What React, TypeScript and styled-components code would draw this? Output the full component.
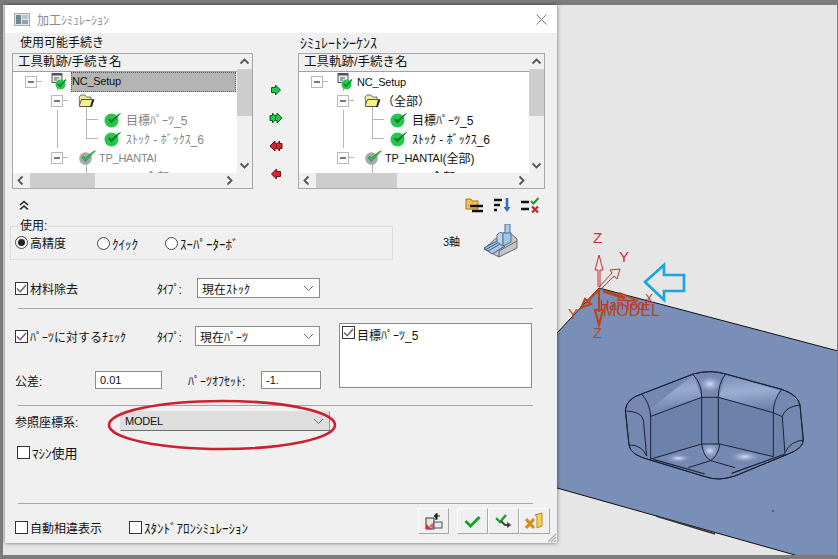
import { FC, ReactNode } from "react";
import styled, { createGlobalStyle } from "styled-components";

const GlobalStyle = createGlobalStyle`
    html, body {
        margin: 0;
        padding: 0;
        background: #7c7c7c;
    }
    * {
        box-sizing: border-box;
    }
`;

const Page = styled.div`
    width: 838px;
    height: 559px;
    overflow: hidden;
    display: flex;
    flex-direction: column;
    padding: 5px 1px 4px 3px;
    background: #7c7c7c;
    font-family: "Liberation Sans", "Noto Sans CJK JP", sans-serif;
    font-size: 12px;
    color: #111;
`;

const Desktop = styled.div`
    flex: 1;
    display: flex;
    align-items: flex-start;
    background: #e6e6e6;
    padding-left: 2px;
    min-height: 0;
`;

const Dialog = styled.div`
    width: 552px;
    height: 538px;
    flex: none;
    display: flex;
    flex-direction: column;
    background: #f0f0f0;
    position: relative;
    box-shadow: 0 0 4px rgba(0, 0, 0, 0.55);
`;

const TitleBar = styled.div`
    height: 28px;
    flex: none;
    display: flex;
    align-items: center;
    gap: 7px;
    padding: 0 10px 0 9px;
    background: #fff;
    color: #8a8a8a;
`;

const TitleText = styled.span`
    flex: 1;
`;

const Lists = styled.div`
    display: flex;
    padding: 3px 12px 0 7px;
    height: 156px;
    flex: none;
`;

const ListColumn = styled.div<{ $width: number }>`
    width: ${p => p.$width}px;
    flex: none;
    display: flex;
    flex-direction: column;
`;

const ListCaption = styled.div<{ $kana?: boolean }>`
    height: 17px;
    line-height: 14px;
    padding-left: ${p => (p.$kana ? 2 : 8)}px;
    font-size: ${p => (p.$kana ? 14 : 12)}px;
`;

const TreeBox = styled.div`
    height: 136px;
    display: grid;
    grid-template-columns: 1fr 15px;
    grid-template-rows: 1fr 15px;
    border: 1px solid #a8a8a8;
    background: #fff;
`;

const TreePane = styled.div`
    overflow: hidden;
    min-width: 0;
`;

const TreeHeader = styled.div`
    height: 18px;
    line-height: 17px;
    padding-left: 5px;
    background: #f0f0f0;
    border-bottom: 1px solid #a0a0a0;
    font-size: 12.5px;
`;

// connector lines are backgrounds: x, y, w, h
const line = (x: number, y: number, w: number | string, h: number | string) =>
    `linear-gradient(#b5b5b5, #b5b5b5) ${x}px ${y}px / ${typeof w === "number" ? `${w}px` : w} ${
        typeof h === "number" ? `${h}px` : h
    } no-repeat`;

const lineSets: Record<string, string> = {
    root: `${line(44, 10, 1, 9)}, ${line(24, 9, 5, 1)}`,
    branchMid: `${line(44, 0, 1, 19)}, ${line(73, 0, 1, 19)}, ${line(73, 9, 12, 1)}`,
    branchEnd: `${line(44, 0, 1, 19)}, ${line(73, 0, 1, 10)}, ${line(73, 9, 12, 1)}`,
    parent: `${line(73, 15, 1, 4)}, ${line(50, 9, 5, 1)}`,
    tail: line(73, 0, 1, 19),
};

const TreeRow = styled.div<{ $lines?: string; $dim?: boolean }>`
    height: 19px;
    display: flex;
    align-items: center;
    position: relative;
    white-space: nowrap;
    color: ${p => (p.$dim ? "#858585" : "#111")};
    ${p => p.$lines && `background: ${lineSets[p.$lines]};`}
`;

const Slot = styled.span<{ $left: number }>`
    position: absolute;
    left: ${p => p.$left}px;
    display: inline-flex;
    align-items: center;
`;

const Latin = styled.span`
    font-size: 11px;
    letter-spacing: -0.25px;
`;

const Expander = styled.span`
    width: 12px;
    height: 12px;
    border: 1px solid #b8b8b8;
    background: #fff;
    position: relative;
    display: block;

    &::after {
        content: "";
        position: absolute;
        left: 2px;
        right: 2px;
        top: 4px;
        height: 2px;
        background: #222;
        transform: scaleY(0.6);
    }
`;

const SelectedLabel = styled.span`
    width: 165px;
    height: 20px;
    line-height: 18px;
    padding-left: 1px;
    background: #b4b4b4;
    outline: 1px dotted #555;
    outline-offset: -1px;
`;

const VScroll = styled.div`
    display: flex;
    flex-direction: column;
    background: #f0f0f0;
    align-items: center;
`;

const HScroll = styled.div`
    display: flex;
    align-items: center;
    background: #f0f0f0;
`;

const ScrollThumb = styled.div<{ $width?: number; $offset?: number }>`
    background: #cdcdcd;
    ${p =>
        p.$width
            ? `width: ${p.$width}px; height: 15px; margin-left: ${p.$offset}px;`
            : "width: 15px; height: 47px;"}
`;

const ScrollSpacer = styled.div`
    flex: 1;
`;

const ScrollCorner = styled.div`
    background: #f0f0f0;
`;

const ArrowColumn = styled.div`
    width: 45px;
    flex: none;
    display: flex;
    flex-direction: column;
    align-items: center;
    gap: 14px;
    padding-top: 47px;
`;

const ToolRow = styled.div`
    height: 30px;
    flex: none;
    display: flex;
    align-items: center;
    padding: 2px 17px 0 13px;
`;

const ToolIcons = styled.div`
    margin-left: auto;
    display: flex;
    gap: 9px;
`;

const UseRow = styled.div`
    height: 51px;
    flex: none;
    display: flex;
    align-items: flex-start;
    padding-left: 5px;
`;

const UseGroup = styled.fieldset`
    width: 383px;
    height: 41px;
    margin: 0;
    padding: 0 0 0 4px;
    border: 1px solid #dcdcdc;
    display: flex;
    align-items: flex-start;

    legend {
        padding: 0 1px;
        margin-left: 4px;
        line-height: 14px;
    }
`;

const Radio = styled.label<{ $width: number; $kana?: boolean }>`
    width: ${p => p.$width}px;
    display: flex;
    align-items: center;
    gap: 2px;
    margin-top: 1px;
    font-size: ${p => (p.$kana ? 13 : 12)}px;
`;

const RadioDot = styled.span<{ $on?: boolean }>`
    width: 13px;
    height: 13px;
    border-radius: 50%;
    border: 1px solid #444;
    background: #fff;
    flex: none;
    display: flex;
    align-items: center;
    justify-content: center;

    &::after {
        content: "";
        width: 7px;
        height: 7px;
        border-radius: 50%;
        background: ${p => (p.$on ? "#222" : "transparent")};
    }
`;

const AxisInfo = styled.div`
    display: flex;
    align-items: center;
    gap: 23px;
    margin-left: 50px;
    height: 36px;
    margin-top: 4px;
`;

const AxisLabel = styled.span`
    font-size: 11px;
`;

const Divider = styled.div<{ $top?: number }>`
    height: 1px;
    flex: none;
    margin: ${p => p.$top ?? 0}px 24px 0 13px;
    background: #a6a6a6;
`;

const FormRow = styled.div<{ $top?: number; $height: number; $left?: number }>`
    height: ${p => p.$height}px;
    margin-top: ${p => p.$top ?? 0}px;
    flex: none;
    display: flex;
    align-items: center;
    padding-left: ${p => p.$left ?? 10}px;
`;

const CheckLabel = styled.label<{ $width?: number; $kana?: boolean }>`
    ${p => p.$width && `width: ${p.$width}px; flex: none;`}
    display: flex;
    align-items: center;
    gap: 2px;
    white-space: nowrap;
    font-size: ${p => (p.$kana ? 13 : 12)}px;
`;

const CheckBox = styled.span`
    width: 13px;
    height: 13px;
    flex: none;
    border: 1px solid #333;
    background: #fff;
    display: flex;
    align-items: center;
    justify-content: center;
`;

const FieldLabel = styled.span<{ $width: number }>`
    width: ${p => p.$width}px;
    flex: none;
    white-space: nowrap;
`;

const TypeLabel = styled(FieldLabel)`
    letter-spacing: -0.8px;
`;

const SelectBox = styled.div<{ $width: number; $gray?: boolean }>`
    width: ${p => p.$width}px;
    height: 20px;
    flex: none;
    display: flex;
    align-items: center;
    justify-content: space-between;
    padding: 0 5px 0 4px;
    border: 1px solid #8a8a8a;
    background: ${p => (p.$gray ? "#dedede" : "#fff")};
    ${p => p.$gray && "border-color: #dedede #9a9a9a #6f6f6f #dedede;"}
`;

const TextBox = styled.div<{ $width: number }>`
    width: ${p => p.$width}px;
    height: 18px;
    flex: none;
    line-height: 16px;
    padding-left: 4px;
    border: 1px solid #8a8a8a;
    background: #fff;
    font-size: 11px;
`;

const PartsBlock = styled.div`
    display: flex;
    flex: none;
    margin-top: 14px;
    padding-left: 10px;
    height: 66px;
`;

const PartsFields = styled.div`
    width: 324px;
    flex: none;
    display: flex;
    flex-direction: column;
    padding-top: 3px;
    gap: 25px;
`;

const PartsLine = styled.div`
    display: flex;
    align-items: center;
`;

const TargetList = styled.div`
    width: 193px;
    height: 65px;
    flex: none;
    padding: 2px;
    display: flex;
    align-items: flex-start;
    gap: 2px;
    border: 1px solid #8a8a8a;
    background: #fff;
`;

const EllipseMark = styled.svg`
    position: absolute;
    left: 102px;
    top: 394px;
    pointer-events: none;
`;

const Filler = styled.div`
    flex: 1;
`;

const BottomRow = styled.div`
    height: 39px;
    flex: none;
    display: flex;
    align-items: flex-start;
    padding: 4px 7px 0 10px;
`;

const BottomChecks = styled.div`
    display: flex;
    gap: 27px;
    padding-top: 10px;
    flex: 1;
`;

const ButtonGroup = styled.div<{ $gap?: number }>`
    display: flex;
    margin-left: ${p => p.$gap ?? 0}px;
`;

const IconButton = styled.button`
    width: 31px;
    height: 26px;
    padding: 0;
    display: flex;
    align-items: center;
    justify-content: center;
    background: #f0f0f0;
    border: 1px solid;
    border-color: #fff #a8a8a8 #a8a8a8 #fff;
`;

const Grip = styled.svg`
    position: absolute;
    right: 0;
    bottom: 0;
`;

const Viewport = styled.svg`
    flex: 1;
    height: 550px;
    display: block;
`;

const Sm: FC<{ children: ReactNode }> = ({ children }) => <>{children}</>;

const Chevron: FC<{ dir: "up" | "down" | "left" | "right" }> = ({ dir }) => {
    const pts = {
        up: "2,8 6,4 10,8",
        down: "2,4 6,8 10,4",
        left: "8,2 4,6 8,10",
        right: "4,2 8,6 4,10",
    }[dir];
    return (
        <svg width='15' height='15' viewBox='-1.5 -1.5 15 15'>
            <polyline points={pts} fill='none' stroke='#555' strokeWidth='1.8' />
        </svg>
    );
};

const Drop = () => (
    <svg width='11' height='7' viewBox='0 0 11 7'>
        <polyline points='1,1 5.5,5.5 10,1' fill='none' stroke='#666' strokeWidth='1' />
    </svg>
);

const Tick = () => (
    <svg width='11' height='11' viewBox='0 0 11 11'>
        <polyline points='1,5.5 4.2,8.8 10,2' fill='none' stroke='#666' strokeWidth='1.4' />
    </svg>
);

const BallCheck: FC<{ gray?: boolean }> = ({ gray }) => (
    <svg width='19' height='17' viewBox='0 0 19 17'>
        <circle cx='7.5' cy='9.5' r={gray ? 6.3 : 7} fill={gray ? "#a9a9a9" : "#22c84a"} />
        <path
            d='M4 8.8 L7.4 12.4 L17.5 1.8 L14.6 3 L7.5 9 L5.8 7.4 Z'
            fill={gray ? "#22c84a" : "#0f7a2c"}
            stroke={gray ? "#0f7a2c" : "none"}
            strokeWidth='0.6'
        />
    </svg>
);

const SetupIcon = () => (
    <svg width='17' height='17' viewBox='0 0 17 17'>
        <rect x='1' y='0.5' width='10' height='9' fill='#eee' stroke='#555' />
        <rect x='1' y='0.5' width='10' height='2' fill='#555' />
        <path d='M3 5h5M3 7h3' stroke='#555' />
        <circle cx='9.5' cy='11.5' r='5' fill='#22c84a' />
        <path d='M6.6 10.6 L9 13.2 L15 6.5' stroke='#0f7a2c' strokeWidth='1.4' fill='none' />
    </svg>
);

const FolderIcon = () => (
    <svg width='17' height='14' viewBox='0 0 17 14'>
        <path d='M1 3 L3 1 H7 L8.5 3 H13 V12 H2 Z' fill='#efe7a8' stroke='#777' />
        <path d='M1 12 L3.5 5.5 H16 L13.5 12.5 H1.5 Z' fill='#f6ef8e' stroke='#555' />
        <path d='M14 6 L16 6 L13.6 13 H12 Z' fill='#222' />
    </svg>
);

const Arrow: FC<{ color: string; edge: string; dir: 1 | -1; double?: boolean }> = ({
    color,
    edge,
    dir,
    double,
}) => (
    <svg width='14' height='14' viewBox='0 0 14 14'>
        <g transform={dir === -1 ? "translate(14,0) scale(-1,1)" : undefined}>
            {double ? (
                <>
                    <path d='M1 4.5 H3.5 V2 L8 7 L3.5 12 V9.5 H1 Z' fill={color} stroke={edge} />
                    <path d='M6.5 4.5 H8 V2 L13 7 L8 12 V9.5 H6.5 Z' fill={color} stroke={edge} />
                </>
            ) : (
                <path d='M2.5 4.5 H6.5 V2 L11.5 7 L6.5 12 V9.5 H2.5 Z' fill={color} stroke={edge} />
            )}
        </g>
    </svg>
);

const Tree: FC<{ dim?: boolean; folderLabel?: string; hantaiSuffix?: string; selected?: boolean }> = ({
    dim,
    folderLabel,
    hantaiSuffix,
    selected,
}) => (
    <TreeBox>
        <TreePane>
            <TreeHeader>工具軌跡/手続き名</TreeHeader>
            <TreeRow $lines='root'>
                <Slot $left={12}>
                    <Expander />
                </Slot>
                <Slot $left={38}>
                    <SetupIcon />
                </Slot>
                <Slot $left={58}>
                    {selected ? (
                        <SelectedLabel>
                            <Latin>NC_Setup</Latin>
                        </SelectedLabel>
                    ) : (
                        <Latin>NC_Setup</Latin>
                    )}
                </Slot>
            </TreeRow>
            <TreeRow $lines='parent'>
                <Slot $left={38}>
                    <Expander />
                </Slot>
                <Slot $left={65}>
                    <FolderIcon />
                </Slot>
                {folderLabel && <Slot $left={83}>{folderLabel}</Slot>}
            </TreeRow>
            <TreeRow $lines='branchMid' $dim={dim}>
                <Slot $left={91}>
                    <BallCheck />
                </Slot>
                <Slot $left={113}>目標ﾊﾟｰﾂ_5</Slot>
            </TreeRow>
            <TreeRow $lines='branchEnd' $dim={dim}>
                <Slot $left={91}>
                    <BallCheck />
                </Slot>
                <Slot $left={113}>ｽﾄｯｸ - ﾎﾞｯｸｽ_6</Slot>
            </TreeRow>
            <TreeRow $lines='parent' $dim={dim}>
                <Slot $left={38}>
                    <Expander />
                </Slot>
                <Slot $left={65}>
                    <BallCheck gray />
                </Slot>
                <Slot $left={86}>
                    <Latin>TP_HANTAI</Latin>
                    {hantaiSuffix}
                </Slot>
            </TreeRow>
            <TreeRow $lines='tail' $dim={dim}>
                <Slot $left={128}>(全部)</Slot>
            </TreeRow>
        </TreePane>
        <VScroll>
            <Chevron dir='up' />
            <ScrollThumb />
            <ScrollSpacer />
            <Chevron dir='down' />
        </VScroll>
        <HScroll>
            <Chevron dir='left' />
            <ScrollThumb $width={selected ? 65 : 81} $offset={2} />
            <ScrollSpacer />
            <Chevron dir='right' />
        </HScroll>
        <ScrollCorner />
    </TreeBox>
);

const App = () => {
    return (
        <Page>
            <GlobalStyle />
            <Desktop>
                <Dialog>
                    <TitleBar>
                        <svg width='16' height='13' viewBox='0 0 16 13'>
                            <rect x='0.5' y='0.5' width='15' height='12' fill='#dfe6ea' stroke='#a4acb2' />
                            <rect x='2' y='2' width='5' height='9' fill='#6d8894' />
                            <rect x='8' y='2' width='6' height='4' fill='#b5c6ce' />
                            <rect x='8' y='7' width='6' height='4' fill='#8aa3ae' />
                        </svg>
                        <TitleText>加工ｼﾐｭﾚｰｼｮﾝ</TitleText>
                        <svg width='11' height='11' viewBox='0 0 11 11'>
                            <path d='M0.5 0.5 L10.5 10.5 M10.5 0.5 L0.5 10.5' stroke='#777' strokeWidth='1' />
                        </svg>
                    </TitleBar>

                    <Lists>
                        <ListColumn $width={241}>
                            <ListCaption>使用可能手続き</ListCaption>
                            <Tree dim selected />
                        </ListColumn>
                        <ArrowColumn>
                            <Arrow color='#22c84a' edge='#0c5a20' dir={1} />
                            <Arrow color='#22c84a' edge='#0c5a20' dir={1} double />
                            <Arrow color='#d8242c' edge='#6a0c10' dir={-1} double />
                            <Arrow color='#d8242c' edge='#6a0c10' dir={-1} />
                        </ArrowColumn>
                        <ListColumn $width={247}>
                            <ListCaption $kana>ｼﾐｭﾚｰﾄｼｰｹﾝｽ</ListCaption>
                            <Tree folderLabel='（全部）' hantaiSuffix='(全部)' />
                        </ListColumn>
                    </Lists>

                    <ToolRow>
                        <svg width='12' height='11' viewBox='0 0 12 11'>
                            <path d='M2 5 L6 1.5 L10 5 M2 9.5 L6 6 L10 9.5' fill='none' stroke='#222' strokeWidth='1.6' />
                        </svg>
                        <ToolIcons>
                            <svg width='19' height='17' viewBox='0 0 19 17'>
                                <path d='M1 2 H6 L7 4 H13 V12 H1 Z' fill='#f6c04e' stroke='#a8761c' />
                                <path d='M5 9 H18 M7 14 H18' stroke='#111' strokeWidth='2.4' />
                            </svg>
                            <svg width='19' height='17' viewBox='0 0 19 17'>
                                <path d='M1 3 H9 M1 8 H7 M1 13 H4' stroke='#111' strokeWidth='2.4' />
                                <path d='M14 1 V11' stroke='#2a6fc0' strokeWidth='2.6' />
                                <path d='M10.5 10 H17.5 L14 15 Z' fill='#2a6fc0' />
                            </svg>
                            <svg width='19' height='17' viewBox='0 0 19 17'>
                                <path d='M0 5 H8 M0 12 H8' stroke='#111' strokeWidth='2.4' />
                                <path d='M10 4 L12.5 6.5 L17.5 1' fill='none' stroke='#1e9a2e' strokeWidth='2' />
                                <path d='M11 9.5 L17 15.5 M17 9.5 L11 15.5' stroke='#c4262c' strokeWidth='2.2' />
                            </svg>
                        </ToolIcons>
                    </ToolRow>

                    <UseRow>
                        <UseGroup>
                            <legend>使用:</legend>
                            <Radio $width={82}>
                                <RadioDot $on />
                                <span>高精度</span>
                            </Radio>
                            <Radio $width={68} $kana>
                                <RadioDot />
                                <span>ｸｲｯｸ</span>
                            </Radio>
                            <Radio $width={120} $kana>
                                <RadioDot />
                                <span>ｽｰﾊﾟｰﾀｰﾎﾞ</span>
                            </Radio>
                        </UseGroup>
                        <AxisInfo>
                            <AxisLabel>3軸</AxisLabel>
                            <svg width='35' height='34' viewBox='0 0 35 34'>
                                <path d='M1 25 L16 33 L34 24 V15 L26 8 L12 15 Z' fill='#c2c6cc' stroke='#666' />
                                <path d='M16 33 V27 L34 17' fill='none' stroke='#666' />
                                <path d='M1 24 L14 17 L22 22 L9 30 Z' fill='#a9c8ea' stroke='#3c5a78' />
                                <path d='M5 27 L18 19.5 M3 25.5 L16 18' stroke='#3c5a78' />
                                <path d='M14 18 V11 Q16 7 20 9 V22 Z' fill='#b9d5ef' stroke='#51708c' />
                                <path d='M20 22 V9 Q24 6 28 9 V18 Z' fill='#a3c6e8' stroke='#51708c' />
                                <rect x='22' y='0' width='5' height='9' fill='#a8cbe8' stroke='#51708c' />
                            </svg>
                        </AxisInfo>
                    </UseRow>

                    <FormRow $top={8} $height={20}>
                        <CheckLabel $width={142}>
                            <CheckBox>
                                <Tick />
                            </CheckBox>
                            <Sm>材料除去</Sm>
                        </CheckLabel>
                        <TypeLabel $width={40}>ﾀｲﾌﾟ:</TypeLabel>
                        <SelectBox $width={123}>
                            <span>現在ｽﾄｯｸ</span>
                            <Drop />
                        </SelectBox>
                    </FormRow>

                    <Divider $top={10} />

                    <PartsBlock>
                        <PartsFields>
                            <PartsLine>
                                <CheckLabel $width={142}>
                                    <CheckBox>
                                        <Tick />
                                    </CheckBox>
                                    <Sm>ﾊﾟｰﾂに対するﾁｪｯｸ</Sm>
                                </CheckLabel>
                                <TypeLabel $width={38}>ﾀｲﾌﾟ:</TypeLabel>
                                <SelectBox $width={125}>
                                    <span>現在ﾊﾟｰﾂ</span>
                                    <Drop />
                                </SelectBox>
                            </PartsLine>
                            <PartsLine>
                                <FieldLabel $width={80}>公差:</FieldLabel>
                                <TextBox $width={67}>0.01</TextBox>
                                <FieldLabel $width={26} />
                                <FieldLabel $width={73}>ﾊﾟｰﾂｵﾌｾｯﾄ:</FieldLabel>
                                <TextBox $width={60}>-1.</TextBox>
                            </PartsLine>
                        </PartsFields>
                        <TargetList>
                            <CheckBox>
                                <Tick />
                            </CheckBox>
                            <span>目標ﾊﾟｰﾂ_5</span>
                        </TargetList>
                    </PartsBlock>

                    <Divider $top={16} />

                    <FormRow $top={5} $height={20}>
                        <FieldLabel $width={105}>参照座標系:</FieldLabel>
                        <SelectBox $width={210} $gray>
                            <Latin>MODEL</Latin>
                            <Drop />
                        </SelectBox>
                    </FormRow>

                    <FormRow $top={14} $height={14} $left={12}>
                        <CheckLabel $kana>
                            <CheckBox />
                            <Sm>ﾏｼﾝ使用</Sm>
                        </CheckLabel>
                    </FormRow>

                    <Filler />
                    <Divider />

                    <BottomRow>
                        <BottomChecks>
                            <CheckLabel>
                                <CheckBox />
                                <Sm>自動相違表示</Sm>
                            </CheckLabel>
                            <CheckLabel $kana>
                                <CheckBox />
                                <Sm>ｽﾀﾝﾄﾞｱﾛﾝｼﾐｭﾚｰｼｮﾝ</Sm>
                            </CheckLabel>
                        </BottomChecks>
                        <ButtonGroup>
                            <IconButton>
                                <svg width='18' height='17' viewBox='0 0 18 17'>
                                    <rect x='1' y='5' width='8' height='11' fill='#e8e8e8' stroke='#333' />
                                    <path d='M1 11 L7 16 H1 Z' fill='#d8303a' />
                                    <path d='M4 13 L9 9 L9 16 Z' fill='#e0606a' />
                                    <rect x='9' y='9' width='8' height='6' fill='#dfe6ee' stroke='#555' />
                                    <path d='M11 7 V3 H15 M9.5 3 L12 0.5 V5.5 Z' fill='none' stroke='#222' strokeWidth='1.2' />
                                </svg>
                            </IconButton>
                        </ButtonGroup>
                        <ButtonGroup $gap={8}>
                            <IconButton>
                                <svg width='17' height='13' viewBox='0 0 17 13'>
                                    <path d='M1.5 6 L6.5 11 L15.5 2' fill='none' stroke='#12a52a' strokeWidth='3' />
                                </svg>
                            </IconButton>
                            <IconButton>
                                <svg width='17' height='15' viewBox='0 0 17 15'>
                                    <path d='M1 4 L5 8 L11 1' fill='none' stroke='#12a52a' strokeWidth='2.4' />
                                    <path d='M6 7 L10 11 H13' fill='none' stroke='#444' strokeWidth='2' />
                                    <path d='M12 8 L16.5 11 L12 14 Z' fill='#444' />
                                </svg>
                            </IconButton>
                            <IconButton>
                                <svg width='19' height='18' viewBox='0 0 19 18'>
                                    <path d='M10 3 L17 1 V14 L12 16 V5 Z' fill='#f5d25a' stroke='#b88a1c' />
                                    <path d='M1 7 L9 16 M9 7 L1 16' stroke='#d98a1e' strokeWidth='3' />
                                </svg>
                            </IconButton>
                        </ButtonGroup>
                    </BottomRow>

                    <EllipseMark width='232' height='56' viewBox='0 0 232 56'>
                        <ellipse
                            cx='115'
                            cy='26'
                            rx='113'
                            ry='24'
                            fill='none'
                            stroke='#cc2030'
                            strokeWidth='2.6'
                        />
                    </EllipseMark>
                    <Grip width='11' height='11' viewBox='0 0 11 11'>
                        <path d='M10 2 L2 10 M10 5 L5 10 M10 8 L8 10' stroke='#b0b0b0' strokeWidth='1.2' />
                    </Grip>
                </Dialog>

                <Viewport viewBox='557 5 280 550' preserveAspectRatio='xMinYMin slice'>
                    <defs>
                        <radialGradient id='hi'>
                            <stop offset='0' stopColor='#d4e0f6' />
                            <stop offset='1' stopColor='#7a8fb8' stopOpacity='0' />
                        </radialGradient>
                        <linearGradient id='bandL' x1='0' y1='0' x2='0.2' y2='1'>
                            <stop offset='0' stopColor='#7a8fb8' />
                            <stop offset='0.5' stopColor='#a6b8da' />
                            <stop offset='1' stopColor='#6f84ac' />
                        </linearGradient>
                    </defs>
                    <polygon
                        points='557,333 599,288 838,351 838,555 795,555 557,488'
                        fill='#7a8fb8'
                    />
                    <path d='M557 333 L599 288 L838 351' fill='none' stroke='#111' strokeWidth='1' />
                    <path d='M557 488 L795 555' fill='none' stroke='#111' strokeWidth='1' />
                    <path d='M656 516 L715 534' stroke='#333' strokeWidth='1.4' />

                    <g transform='translate(555,300) scale(0.3333)' fill='none' stroke='#1b2233' strokeWidth='3'>
                        <path
                            d='M211 330 Q215 295 260 282 L415 222 Q465 208 512 222 L680 268 Q730 285 735 315 L745 420 Q745 445 700 462 L540 528 Q490 545 450 530 L285 480 Q225 465 222 435 Z'
                            fill='#7488b2'
                        />
                        <path
                            d='M285 350 L440 292 H490 L655 338 L682 350 L690 462 L655 470 L495 432 H440 L285 478 Z'
                            fill='#6d82ab'
                            stroke='none'
                        />
                        <path d='M270 340 L415 225 L440 292 Z' fill='url(#bandL)' stroke='none' opacity='0.7' />
                        <path d='M512 225 L675 272 L655 335 L492 292 Z' fill='url(#bandL)' stroke='none' opacity='0.8' />
                        <ellipse cx='465' cy='252' rx='40' ry='28' fill='url(#hi)' stroke='none' />
                        <ellipse cx='465' cy='452' rx='32' ry='25' fill='url(#hi)' stroke='none' />
                        <ellipse cx='570' cy='470' rx='50' ry='18' fill='url(#hi)' stroke='none' />
                        <ellipse cx='370' cy='475' rx='40' ry='14' fill='url(#hi)' stroke='none' />
                        <path d='M211 330 Q215 295 260 282 L415 222 Q465 208 512 222 L680 268 Q730 285 735 315 L745 420 Q745 445 700 462 L540 528 Q490 545 450 530 L285 480 Q225 465 222 435 Z' />
                        <path d='M415 225 Q440 250 440 292 M512 222 Q490 250 490 292' />
                        <path d='M440 292 H490 M285 350 L440 292 M490 292 L655 338 L682 350' />
                        <path d='M260 282 Q285 310 287 350 M680 268 Q655 300 655 338' />
                        <path d='M213 333 Q260 335 265 360 L275 468 M735 315 Q690 320 682 350 L690 462' />
                        <path d='M222 435 Q262 435 275 468 M745 420 Q705 425 692 455' />
                        <path d='M287 350 V478 M440 292 V432 M490 292 V432 M655 338 V470' />
                        <path d='M285 478 L440 432 H495 L655 470' />
                        <path d='M440 432 Q445 470 467 482 Q488 470 495 432' />
                        <path d='M400 503 L467 482 L540 503' />
                        <path d='M295 478 L450 522 M530 520 L690 462' strokeWidth='3.6' />
                    </g>

                    <circle cx='773' cy='511' r='0.8' fill='#111' />

                    <g fill='none' stroke='#cc2a34' strokeWidth='1'>
                        <path d='M598 287 V270 H595 L599 255 L603 270 H600 V287' />
                        <path d='M599 287 L612 273 L610 270 L620 269 L617 279 L614 276 L601 289' />
                    </g>
                    <g fontFamily='"Liberation Sans", sans-serif' fontSize='15' fill='#cc2a34'>
                        <text x='593' y='243'>Z</text>
                        <text x='619' y='262'>Y</text>
                        <text x='600' y='310' fontSize='14' textLength='48' lengthAdjust='spacingAndGlyphs'>
                            HanTool
                        </text>
                    </g>
                    <g fill='none' stroke='#b8461c' strokeWidth='2.2'>
                        <path d='M599 289 L586 303' />
                        <path d='M581 308 L585 299 L591 304 Z' />
                        <path d='M599 290 V312' />
                        <path d='M595 310 H603 L599 325 Z' />
                        <path d='M603 291 L625 298' strokeWidth='3' />
                        <path d='M620 293 L638 301 L618 300 Z' strokeWidth='1.6' />
                    </g>
                    <g fontFamily='"Liberation Sans", sans-serif' fontSize='15' fill='#b8461c'>
                        <text x='568' y='319'>Y</text>
                        <text x='593' y='338'>Z</text>
                        <text x='603' y='316' fontSize='17' textLength='57' lengthAdjust='spacingAndGlyphs'>
                            MODEL
                        </text>
                        <text x='645' y='303' fontSize='12'>X</text>
                    </g>
                    <path
                        d='M645 282 L664 265 V275 H684 V291 H664 V300 Z'
                        fill='none'
                        stroke='#19a4e2'
                        strokeWidth='2.6'
                    />
                </Viewport>
            </Desktop>
        </Page>
    );
};

export default App;
